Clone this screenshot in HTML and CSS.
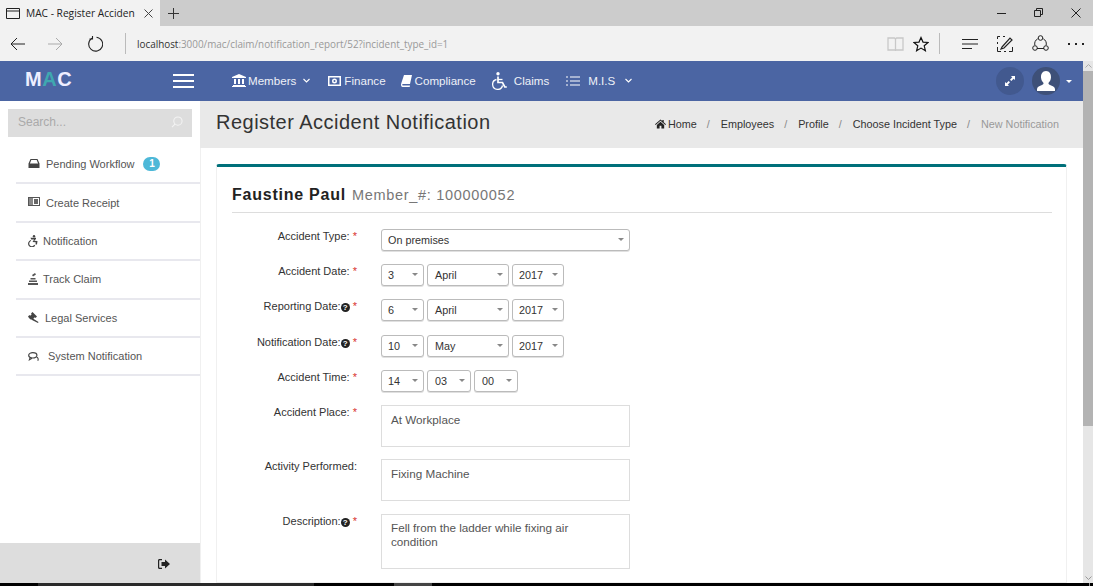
FILE: index.html
```html
<!DOCTYPE html>
<html lang="en">
<head>
<meta charset="utf-8">
<title>MAC - Register Accident Notification</title>
<link rel="stylesheet" href="styles.css">
</head>
<body>
<div class="browser">
  <div class="tabbar">
    <div class="tab">
      <svg class="tab-icon" width="14" height="11" viewBox="0 0 14 11"><path d="M.5.5h13v10H.5zM.5 3h13" fill="none" stroke="#222"/></svg>
      <span class="tab-title">MAC - Register Acciden</span>
      <svg width="9" height="9" viewBox="0 0 9 9"><path d="M.5.500l8 8M8.500.500l-8 8" stroke="#444" fill="none"/></svg>
    </div>
    <svg class="newtab" width="11" height="11" viewBox="0 0 11 11"><path d="M5.500 0v11M0 5.500h11" stroke="#333" fill="none"/></svg>
    <div class="winctl">
      <svg width="10" height="10" viewBox="0 0 10 10"><path d="M0 5.500h9" stroke="#222" fill="none"/></svg>
      <svg width="10" height="10" viewBox="0 0 10 10"><path d="M.5 2.500h6v6h-6zM2.500 2.500v-2h6v6h-2" stroke="#222" fill="none"/></svg>
      <svg width="10" height="10" viewBox="0 0 10 10"><path d="M.5.5l9 9M9.500.5l-9 9" stroke="#222" fill="none"/></svg>
    </div>
  </div>
  <div class="toolbar">
    <svg class="tb-back" width="16" height="14" viewBox="0 0 16 14"><path d="M15 7H1M7 1L1 7l6 6" stroke="#222" fill="none"/></svg>
    <svg class="tb-fwd" width="16" height="14" viewBox="0 0 16 14"><path d="M0 7h14M8 1l6 6-6 6" stroke="#aaa" fill="none"/></svg>
    <svg class="tb-reload" width="16" height="16" viewBox="0 0 16 16"><path d="M5 2.200A7 7 0 1 0 9.500 1.200M5.500 0v3h-3" stroke="#222" fill="none" stroke-width="1.100"/></svg>
    <div class="tb-sep"></div>
    <div class="url"><span class="url-host">localhost</span>:3000/mac/claim/notification_report/52?incident_type_id=1</div>
    <svg class="tb-read" width="17" height="14" viewBox="0 0 17 14"><path d="M1 1h6.500l1 1 1-1H16v12H9.500l-1 .5-1-.5H1zM8.500 2v11" fill="none" stroke="#c8c8c8" stroke-width="1.300"/></svg>
    <svg class="tb-star" width="16" height="16" viewBox="0 0 16 16"><path d="M8 1.500l2 4.600 5 .4-3.800 3.300 1.200 4.900L8 12.100l-4.400 2.600 1.200-4.900L1 6.500l5-.4z" fill="none" stroke="#111" stroke-width="1.200"/></svg>
    <div class="tb-sep tb-sep-b"></div>
    <svg class="tb-hub" width="17" height="12" viewBox="0 0 17 12"><path d="M0 1.500h16M0 6h16M0 10.500h10" stroke="#222" fill="none"/></svg>
    <svg class="tb-note" width="16" height="16" viewBox="0 0 16 16"><path d="M.5 3V.5H3M6 .5h2M.5 6v2M.5 11v4.500H4M7 15.500h2M12 15.500h3.500V11" stroke="#222" fill="none"/><path d="M5 11l8-9 2 2-8 8-3 1z" fill="none" stroke="#222" stroke-width="1.200"/></svg>
    <svg class="tb-share" width="17" height="17" viewBox="0 0 17 17"><path d="M5.700 3.800A6 6 0 0 0 2.800 10M14.200 10a6 6 0 0 0-2.900-6.200M5 13.500h7" stroke="#222" fill="none"/><circle cx="8.500" cy="3" r="2.300" fill="none" stroke="#222"/><circle cx="3" cy="13" r="2.300" fill="none" stroke="#222"/><circle cx="14" cy="13" r="2.300" fill="none" stroke="#222"/></svg>
    <div class="tb-more"><i></i><i></i><i></i></div>
  </div>
</div>

<div class="viewport">
  <div class="page">
    <header class="topnav">
      <div class="logo">M<span class="logo-a">A</span>C</div>
      <div class="burger"><i></i><i></i><i></i></div>
      <nav class="navlinks">
        <a class="navlink nl-members">
          <svg width="14" height="13" viewBox="0 0 14 13"><path d="M7 0l7 3v1H0V3zM1 11h12v1H1zM0 12h14v1H0zM2 5h2v5H2zM6 5h2v5H6zM10 5h2v5h-2z" fill="#fff"/></svg>
          Members
          <svg class="chev" width="7" height="5" viewBox="0 0 7 5"><path d="M.5 1l3 3 3-3" fill="none" stroke="#fff" stroke-width="1.100"/></svg>
        </a>
        <a class="navlink nl-finance">
          <svg width="13" height="10" viewBox="0 0 13 10"><path fill-rule="evenodd" d="M0 0h13v10H0zM1.500 1.500v7h10v-7zM6.500 2.500a2.500 2.500 0 1 1 0 5 2.500 2.500 0 0 1 0-5zM6.500 4a1 1 0 1 0 0 2 1 1 0 0 0 0-2z" fill="#fff"/></svg>
          Finance
        </a>
        <a class="navlink">
          <svg width="11" height="12" viewBox="0 0 11 12"><path d="M3 0h8L9 9H1.800c-.8 0-.8 1.500 0 1.500H9L8.700 12H1.500C0 12-.2 10 .2 8.500z" fill="#fff"/></svg>
          Compliance
        </a>
        <a class="navlink nl-claims">
          <svg width="15" height="18" viewBox="0 0 15 18"><circle cx="6" cy="1.800" r="1.700" fill="#fff"/><path d="M6 4.500v6h4.500l2.300 4.500h2" fill="none" stroke="#fff" stroke-width="1.700"/><path d="M6 7.500h4.500" stroke="#fff" stroke-width="1.300"/><path d="M4.500 7.500A5 5 0 1 0 10.500 13.500" fill="none" stroke="#fff" stroke-width="1.300"/></svg>
          Claims
        </a>
        <a class="navlink nl-mis">
          <svg width="14" height="10" viewBox="0 0 14 10"><path d="M0 1h2M4 1h10M0 5h2M4 5h10M0 9h2M4 9h10" stroke="#fff" stroke-width="1.200" fill="none"/></svg>
          M.I.S
          <svg class="chev chev-mis" width="7" height="5" viewBox="0 0 7 5"><path d="M.5 1l3 3 3-3" fill="none" stroke="#fff" stroke-width="1.100"/></svg>
        </a>
      </nav>
      <div class="nav-right">
        <div class="round-btn">
          <svg width="10" height="10" viewBox="0 0 11 11"><path d="M6.500 0H11v4.500L9.500 3 7 5.500 5.500 4 8 1.500zM4.500 11H0V6.500L1.500 8 4 5.500 5.500 7 3 9.500z" fill="#fff"/></svg>
        </div>
        <div class="avatar">
          <svg width="24" height="24" viewBox="0 0 24 24"><path d="M12 2c3.600 0 5.200 3 5 6.500-.2 2.600-1.300 4.300-2.400 5.200-.4 1 .1 1.800 1.400 2.300 2.400.9 4.700 1.900 5 4V22H3v-2c.3-2.100 2.600-3.100 5-4 1.300-.5 1.800-1.300 1.400-2.300C8.300 12.800 7.200 11.100 7 8.500 6.800 5 8.400 2 12 2z" fill="#fff"/></svg>
        </div>
        <span class="caret-white"></span>
      </div>
    </header>

    <div class="content-row">
      <aside class="sidebar">
        <div class="search">
          <span>Search...</span>
          <svg width="12" height="12" viewBox="0 0 13 13"><circle cx="7.500" cy="5.500" r="4.500" fill="none" stroke="#f4f4f4" stroke-width="1.100"/><path d="M4.300 8.700L1 12" stroke="#f4f4f4" stroke-width="1.100"/></svg>
        </div>
        <ul class="menu">
          <li class="menu-item">
            <svg class="mi mi-w" width="11" height="9" viewBox="0 0 11 9"><path fill-rule="evenodd" d="M2 0h7l2 4.500V9H0V4.500zM2.800 1L1.400 4.500h8.200L8.200 1z" fill="#444"/></svg>
            <span class="gap-w">Pending Workflow</span>
            <span class="badge">1</span>
          </li>
          <li class="menu-item">
            <svg class="mi mi-w" width="12" height="9" viewBox="0 0 12 9"><path fill-rule="evenodd" d="M0 0h12v9H0zM1 1v7h10V1z" fill="#555"/><path d="M1 1h4v7H1z" fill="#888"/><path d="M6 2h4v5H6z" fill="#666"/></svg>
            <span class="gap-w">Create Receipt</span>
          </li>
          <li class="menu-item">
            <svg class="mi" width="10" height="12" viewBox="0 0 10 12"><circle cx="6" cy="1.200" r="1.200" fill="#444"/><path d="M2.500 2.800h5.500v1.200l-1.800 1.800 3.300.3-.5 3.400H7.500l.2-2.300-3.200-.2 1.600-2.500H3.200z" fill="#444"/><path d="M3 5.500a3.200 3.200 0 1 0 3.700 4.600" fill="none" stroke="#444" stroke-width="1.200"/></svg>
            <span class="gap-n">Notification</span>
          </li>
          <li class="menu-item">
            <svg class="mi" width="10" height="12" viewBox="0 0 10 12"><path d="M0 10h10v2H0zM1 7.500h8V9H1zM2.500 5h5v1.500h-5zM4 2l3-2 1 1.500-3 2z" fill="#555"/></svg>
            <span class="gap-n">Track Claim</span>
          </li>
          <li class="menu-item">
            <svg class="mi" width="11" height="11" viewBox="0 0 11 11"><path d="M4.500 0L9 4.500 7.500 6 6.800 5.300 5.300 6.800 10.500 10 10 11 4 7.900 3 7.200 2.500 7.500 1 6 0 4.500 1.500 3 2.200 3.700 3.700 2.200 3 1.500z" fill="#444"/></svg>
            <span class="gap-l">Legal Services</span>
          </li>
          <li class="menu-item">
            <svg class="mi" width="11" height="9" viewBox="0 0 11 9"><ellipse cx="4.800" cy="3.300" rx="4.100" ry="2.700" fill="none" stroke="#444" stroke-width="1.200"/><path d="M2 6l-.6 1.800L4 6.300M8.500 5c1.800.8 2 2.200 1.300 3.700" fill="none" stroke="#444" stroke-width="1.100"/></svg>
            <span class="gap-s">System Notification</span>
          </li>
        </ul>
        <div class="side-foot">
          <svg width="12" height="10" viewBox="0 0 12 10"><path d="M4 0H1.500C.6 0 0 .6 0 1.500v7C0 9.400.6 10 1.500 10H4V8.800H1.700c-.3 0-.5-.2-.5-.5v-6.600c0-.3.2-.5.500-.5H4zM7 .5L12 5 7 9.500V7H3.500V3H7z" fill="#222"/></svg>
        </div>
      </aside>

      <main class="main">
        <div class="page-head">
          <h1>Register Accident Notification</h1>
          <ol class="crumbs">
            <li class="crumb-home">
              <svg width="11" height="10" viewBox="0 0 12 10"><path d="M6 0l2 1.700V.7h1.500V3L12 5.200l-.7.800L6 1.500.7 6 0 5.200zM2 6l4-3.400L10 6v4H7V7H5v3H2z" fill="#222"/></svg>
              Home
            </li>
            <li>Employees</li>
            <li>Profile</li>
            <li>Choose Incident Type</li>
            <li class="crumb-active">New Notification</li>
          </ol>
        </div>
        <section class="card">
          <div class="card-head">
            <strong>Faustine Paul</strong> <span>Member_#: 100000052</span>
          </div>
          <form class="form">
            <div class="row">
              <div class="lbl">Accident Type: <b>*</b></div>
              <div class="sel w-full">On premises</div>
            </div>
            <div class="row">
              <div class="lbl">Accident Date: <b>*</b></div>
              <div class="ctl-group">
                <div class="sel w-day">3</div><div class="sel w-month">April</div><div class="sel w-year">2017</div>
              </div>
            </div>
            <div class="row row-wide">
              <div class="lbl">Reporting Date:<span class="help">?</span> <b>*</b></div>
              <div class="ctl-group">
                <div class="sel w-day">6</div><div class="sel w-month">April</div><div class="sel w-year">2017</div>
              </div>
            </div>
            <div class="row">
              <div class="lbl">Notification Date:<span class="help">?</span> <b>*</b></div>
              <div class="ctl-group">
                <div class="sel w-day">10</div><div class="sel w-month">May</div><div class="sel w-year">2017</div>
              </div>
            </div>
            <div class="row">
              <div class="lbl">Accident Time: <b>*</b></div>
              <div class="ctl-group">
                <div class="sel w-day">14</div><div class="sel w-min">03</div><div class="sel w-sec">00</div>
              </div>
            </div>
            <div class="row row-tight">
              <div class="lbl">Accident Place: <b>*</b></div>
              <div class="area h-42">At Workplace</div>
            </div>
            <div class="row">
              <div class="lbl">Activity Performed:</div>
              <div class="area h-42">Fixing Machine</div>
            </div>
            <div class="row">
              <div class="lbl">Description:<span class="help">?</span> <b>*</b></div>
              <div class="area h-55">Fell from the ladder while fixing air condition</div>
            </div>
            <div class="row">
              <div class="lbl"></div>
              <div class="area h-42 area-next"></div>
            </div>
          </form>
        </section>
      </main>
    </div>
  </div>
  <div class="vscroll">
    <div class="vs-btn"><svg width="7" height="4" viewBox="0 0 7 4"><path d="M.5 3.500l3-3 3 3" fill="none" stroke="#aaa"/></svg></div>
    <div class="vs-thumb"></div>
    <div class="vs-track"></div>
    <div class="vs-btn"><svg width="7" height="4" viewBox="0 0 7 4"><path d="M.5.500l3 3 3-3" fill="none" stroke="#999"/></svg></div>
  </div>
</div>

<div class="taskbar">
  <div class="task task-a"></div>
  <div class="task task-b"></div>
  <div class="task task-c"></div>
  <div class="task task-d"></div>
  <div class="task task-e"></div>
  <div class="task task-f"></div>
</div>
</body>
</html>
```
FILE: styles.css
```css
* { box-sizing: border-box; }
html, body { margin: 0; height: 100%; overflow: hidden; background: #fff; }
body { width: 1093px; height: 586px; font-family: "Liberation Sans", Arial, sans-serif; font-size: 12px; color: #333; display: flex; flex-direction: column; }
svg { display: block; flex: none; }

.tabbar { height: 26px; background: #ccc; display: flex; align-items: center; }
.tab { width: 160px; height: 26px; background: #f2f2f2; display: flex; align-items: center; padding-left: 6px; }
.tab-icon { margin-right: 6px; margin-top: 1px; }
.tab-title { font-family: "Open Sans", "Liberation Sans", sans-serif; font-size: 10.2px; color: #222; width: 118px; white-space: nowrap; }
.newtab { margin-left: 8px; }
.winctl { margin-left: auto; display: flex; gap: 27px; padding-right: 12px; }

.toolbar { height: 35px; background: #f2f2f2; display: flex; align-items: center; }
.tb-back { margin-left: 10px; }
.tb-fwd { margin-left: 22px; }
.tb-reload { margin-left: 23px; }
.tb-sep { width: 1px; height: 21px; background: #bbb; margin-left: 22px; }
.url { font-family: "Open Sans", "Liberation Sans", sans-serif; font-size: 9.9px; color: #999; margin-left: 11px; width: 750px; white-space: nowrap; }
.url-host { color: #333; }
.tb-star { margin-left: 9px; }
.tb-sep-b { margin-left: 10px; }
.tb-hub { margin-left: 22px; }
.tb-note { margin-left: 18px; }
.tb-share { margin-left: 19px; }
.tb-more { display: flex; gap: 5px; margin-left: 19px; }
.tb-more i { width: 2px; height: 2px; background: #222; display: block; }

.viewport { flex: 1; min-height: 0; display: flex; }
.page { flex: 1; min-width: 0; display: flex; flex-direction: column; }
.topnav { height: 40px; flex: none; background: #4b65a3; display: flex; align-items: center; color: #fff; }
.logo { width: 173px; padding-left: 25px; padding-bottom: 4px; font-size: 20px; font-weight: 700; letter-spacing: .5px; color: #eef; }
.logo-a { color: #3fa8b0; }
.burger { width: 21px; display: flex; flex-direction: column; gap: 4px; }
.burger i { display: block; height: 2px; background: #fff; }
.navlinks { display: flex; align-items: center; margin-left: 38px; padding-bottom: 1px; }
.navlink { display: flex; align-items: center; gap: 3px; font-size: 11.6px; color: #eef1f8; margin-right: 16px; white-space: nowrap; }
.nl-members { gap: 2px; margin-right: 18px; }
.nl-finance { margin-right: 15px; }
.chev { margin-left: 5px; }
.nl-claims { gap: 7px; margin-right: 17px; }
.nl-mis { gap: 8px; }
.chev-mis { margin-left: 2px; }
.nav-right { margin-left: auto; display: flex; align-items: center; padding-right: 11px; }
.round-btn { width: 28px; height: 28px; border-radius: 50%; background: #42598f; display: flex; align-items: center; justify-content: center; }
.avatar { width: 28px; height: 28px; border-radius: 50%; background: #3e5078; display: flex; align-items: center; justify-content: center; margin-left: 8px; overflow: hidden; }
.caret-white { width: 0; height: 0; border: 3.5px solid transparent; border-top-color: #fff; border-bottom: 0; margin-left: 6px; }

.content-row { flex: 1; min-height: 0; display: flex; }
.sidebar { width: 200px; flex: none; background: #fff; display: flex; flex-direction: column; padding-top: 8px; }
.search { margin-left: 8px; width: 184px; height: 28px; background: #ddd; display: flex; align-items: center; justify-content: space-between; padding: 0 9px 2px 10px; color: #aaa; font-size: 12px; flex: none; }
.menu { list-style: none; margin: 9px 0 0 16px; padding: 0; flex: 1; }
.menu-item { height: 38.4px; border-bottom: 2px solid #e8e8ee; display: flex; align-items: center; padding-left: 12px; font-size: 11px; color: #555; }
.gap-w { margin-left: 6px; }
.mi-w { margin-top: -2px; width: 12px; }
.gap-n { margin-left: 5px; }
.gap-l { margin-left: 6px; }
.gap-s { margin-left: 9px; }
.badge { width: 17px; height: 14px; border-radius: 8px; background: #4db8d8; color: #fff; font-size: 10px; font-weight: 700; text-align: center; line-height: 14px; margin-left: 9px; }
.side-foot { height: 40px; flex: none; background: #ddd; display: flex; align-items: center; justify-content: flex-end; padding: 2px 30px 0 0; }

.main { flex: 1; min-width: 0; display: flex; flex-direction: column; overflow: hidden; box-shadow: inset 1px 0 0 #f0f0f0; }
.page-head { height: 47px; flex: none; background: #e9e9e9; display: flex; align-items: center; justify-content: space-between; padding: 0 24px 3px 16px; }
.page-head h1 { margin: 0 0 2px; font-size: 20px; font-weight: 400; letter-spacing: .48px; color: #333; }
.crumbs { list-style: none; margin: 1px 0 0; padding: 0; display: flex; font-size: 10.8px; color: #333; }
.crumbs li { display: flex; align-items: center; gap: 2px; }
.crumbs li + li::before { content: "/"; color: #888; margin: 0 9px 0 10px; }
.crumb-active { color: #999; }

.card { flex: 1; margin: 16px 16px 0; background: #fff; border: 1px solid #f0f0f0; border-top: 3px solid #00707a; border-radius: 3px 3px 0 0; padding: 0 14px 0 15px; min-height: 0; overflow: hidden; }
.card-head { height: 46px; border-bottom: 1px solid #ddd; display: flex; align-items: center; gap: 6px; font-size: 14.5px; color: #777; letter-spacing: .7px; padding-top: 14px; padding-bottom: 3px; }
.card-head strong { font-size: 16px; letter-spacing: .76px; color: #222; }
.form { padding-top: 16px; }
.row { display: flex; margin-bottom: 13px; }
.row-wide { margin-bottom: 14px; }
.row-tight { margin-bottom: 12px; }
.lbl { width: 125px; flex: none; margin-right: 24px; text-align: right; font-size: 11px; color: #333; line-height: 14px; }
.lbl b { color: #d9332e; font-weight: 400; }
.help { display: inline-block; width: 9px; height: 9px; border-radius: 50%; background: #222; color: #fff; font-size: 8px; font-weight: 700; line-height: 9px; text-align: center; vertical-align: 0; }
.ctl-group { display: flex; gap: 3px; }
.sel { position: relative; height: 22px; border: 1px solid #bbb; border-radius: 3px; background: #fff; font-size: 10.8px; color: #333; line-height: 20px; padding-left: 6px; flex: none; box-shadow: 0 1px 0 #e0e0e0; }
.sel::after { content: ""; position: absolute; right: 5px; top: 8px; border: 3.5px solid transparent; border-top-color: #888; border-bottom: 0; }
.w-full { width: 249px; }
.w-day { width: 43px; }
.w-month { width: 82px; padding-left: 7px; }
.w-year { width: 52px; }
.w-min { width: 44px; padding-left: 7px; }
.w-sec { width: 44px; padding-left: 7px; }
.area { width: 249px; border: 1px solid #ddd; background: #fff; font-size: 11.7px; color: #555; line-height: 14px; padding: 7px 40px 7px 9px; flex: none; }
.h-42 { height: 42px; }
.h-55 { height: 55px; padding-top: 6px; }
.area-next { border-top-color: #777; }

.vscroll { width: 10px; flex: none; background: #e6e6e6; display: flex; flex-direction: column; }
.vs-btn { height: 10px; display: flex; align-items: center; justify-content: center; flex: none; }
.vs-thumb { height: 355px; background: #b3b3b3; flex: none; }
.vs-track { flex: 1; }

.taskbar { height: 3px; flex: none; background: #000; display: flex; }
.task { height: 3px; flex: none; }
.task-a { width: 38px; }
.task-b { width: 276px; background: #2a2a2a; }
.task-c { width: 80px; }
.task-d { width: 38px; background: #444; }
.task-e { width: 657px; }
.task-f { width: 1px; background: #999; }
```
